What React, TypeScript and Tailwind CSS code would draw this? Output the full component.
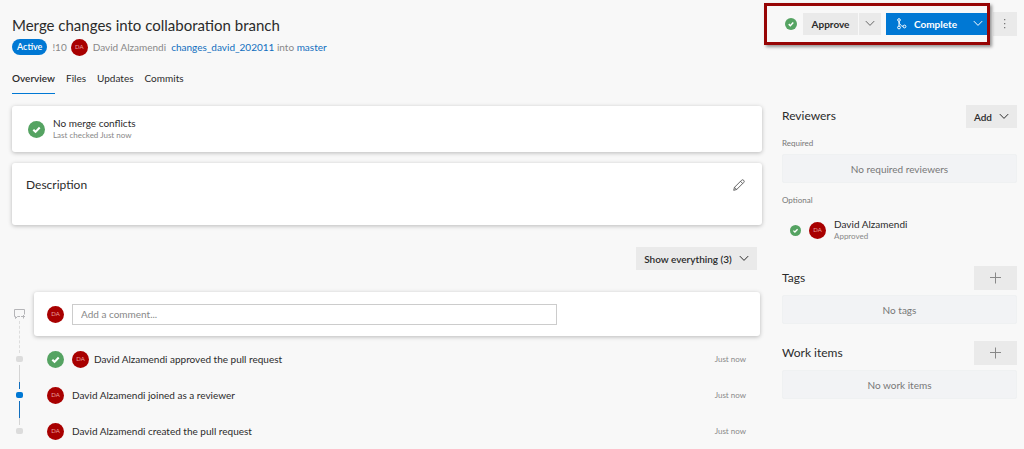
import React from "react";

function CheckCircle({ className }: { className: string }) {
  return (
    <svg viewBox="0 0 18 18" className={className + " shrink-0"} aria-hidden="true">
      <circle cx="9" cy="9" r="9" fill="#55a362" />
      <path d="M5.6 9.2 8 11.5l4.4-4.6" fill="none" stroke="#fff" strokeWidth="2.2" />
    </svg>
  );
}

function Avatar() {
  return (
    <span className="flex size-[17px] shrink-0 items-center justify-center rounded-full bg-[#a80000] text-[6px] leading-none text-[#e8a0a0]">
      DA
    </span>
  );
}

function Chevron() {
  return (
    <svg viewBox="0 0 10 10" className="size-[10px] shrink-0" fill="none" stroke="currentColor" aria-hidden="true">
      <path d="M0.8 2.1 5 6.4l4.2-4.3" />
    </svg>
  );
}

function Plus() {
  return (
    <svg viewBox="0 0 12 12" className="size-3" stroke="#888" aria-hidden="true">
      <path d="M5.5 0.5v11M0 5.5h11" />
    </svg>
  );
}

function MergeIcon() {
  return (
    <svg viewBox="0 0 11 12" className="h-3 w-[11px]" fill="none" stroke="#fff" aria-hidden="true">
      <circle cx="3" cy="2" r="1.3" />
      <circle cx="3" cy="9.5" r="1.4" />
      <circle cx="8.500" cy="8.500" r="1.400" />
      <path d="M3 3.300v4.800M3 3.600C3.400 6.200 5 8 7.100 8.400" />
    </svg>
  );
}

function PencilIcon() {
  return (
    <svg viewBox="0 0 12 12" className="size-3" fill="none" stroke="#555" strokeWidth="0.9" aria-hidden="true">
      <path d="M0.7 11.300 1.500 8.300 8.500 1.300a1.300 1.300 0 0 1 2.200 2.200L3.700 10.500zM7.500 2.300l2.200 2.200M1.500 8.300l2.200 2.200" />
    </svg>
  );
}

function CommentIcon() {
  return (
    <svg viewBox="0 0 12 11" className="h-[11px] w-3" fill="none" stroke="#b5b5b8" aria-hidden="true">
      <path d="M7 7.500H4.500l-2 2v-2h-1v-7h10v5M8 7.500h4M10.500 6v3.500" />
    </svg>
  );
}

function EmptyBox({ children }: { children: React.ReactNode }) {
  return (
    <div className="flex h-[29px] items-center justify-center rounded-xs border border-[#eff1f2] bg-[#f2f3f5] text-[#777]">
      {children}
    </div>
  );
}

function SectionHead({ title }: { title: string }) {
  return (
    <div className="flex items-center justify-between">
      <h2 className="text-[12px]">{title}</h2>
      <button aria-label={"Add " + title.toLowerCase()} className="flex h-6 w-[43px] items-center justify-center bg-[#eaeaea]">
        <Plus />
      </button>
    </div>
  );
}

const tabs = ["Overview", "Files", "Updates", "Commits"];

const events = [
  { text: "David Alzamendi approved the pull request", approved: true },
  { text: "David Alzamendi joined as a reviewer", approved: false },
  { text: "David Alzamendi created the pull request", approved: false },
];

const card = "rounded-[3px] bg-white shadow-[0_1px_4px_rgba(0,0,0,0.26)]";

export default function App() {
  return (
    <div className="min-h-screen bg-[#f8f8f8] pr-[7px] pl-3 font-[Lato,sans-serif] text-[10px] leading-4 text-[#2b2b2b]">
      <header className="flex items-start justify-between pt-3">
        <div>
          <h1 className="h-[26px] text-[15px] leading-[26px]">Merge changes into collaboration branch</h1>
          <div className="flex h-[18px] items-center text-[#888]">
            <span className="flex h-4 items-center rounded-full bg-[#0078d4] px-[5px] text-[9px] font-semibold text-white">Active</span>
            <span className="mr-1 ml-[5px]">!10</span>
            <Avatar />
            <span className="mr-[5px] ml-[5px]">David Alzamendi</span>
            <span>
              <a href="#source" className="text-[#106ebe]">changes_david_202011</a> into{" "}
              <a href="#target" className="text-[#106ebe]">master</a>
            </span>
          </div>
        </div>
        <div className="relative flex h-6 items-center">
          <CheckCircle className="mr-[6px] size-3" />
          <button className="h-[22px] w-[55px] bg-[#eaeaea] font-bold">Approve</button>
          <button aria-label="Approve options" className="ml-px flex h-[22px] w-[22px] items-center justify-center bg-[#eaeaea] text-[#666]">
            <Chevron />
          </button>
          <button className="ml-[5px] flex h-[22px] w-[81px] items-center justify-center gap-[7px] bg-[#0078d4] font-bold text-white">
            <MergeIcon />
            Complete
          </button>
          <button aria-label="Complete options" className="flex h-[22px] w-[22px] items-center justify-center bg-[#0078d4] text-white">
            <Chevron />
          </button>
          <button aria-label="More options" className="ml-1 flex h-6 w-6 items-center justify-center bg-[#eaeaea]">
            <svg viewBox="0 0 2 12" className="h-3 w-[2px]" fill="#777" aria-hidden="true">
              <path d="M0 1h1.300v1.300H0zM0 5h1.300v1.300H0zM0 9h1.300v1.300H0z" />
            </svg>
          </button>
          <div className="pointer-events-none absolute -top-[9px] right-[27px] -left-[21px] h-[42px] border-3 border-[#970505] shadow-[2px_2px_3px_rgba(0,0,0,0.4)]" />
        </div>
      </header>

      <nav className="mt-[14px] flex gap-[11px]">
        {tabs.map((t, i) => (
          <a
            key={t}
            href={"#" + t.toLowerCase()}
            className={i === 0 ? "h-6 border-b border-[#0078d4] font-semibold" : "h-6"}
          >
            {t}
          </a>
        ))}
      </nav>

      <div className="mt-[11px] flex items-start gap-5">
        <main className="min-w-0 flex-1 pt-px">
          <section className={card + " flex h-[46px] items-center gap-2 pl-4"}>
            <CheckCircle className="size-[17px]" />
            <div className="leading-3">
              <p>No merge conflicts</p>
              <p className="text-[8px] text-[#888]">Last checked Just now</p>
            </div>
          </section>

          <section className={card + " mt-[11px] flex h-[62px] items-start justify-between pt-[14px] pr-[17px] pl-[14px]"}>
            <h2 className="text-[12px]">Description</h2>
            <button aria-label="Edit description" className="mt-[2px]">
              <PencilIcon />
            </button>
          </section>

          <div className="mt-[22px] flex justify-end pr-[5px]">
            <button className="flex h-[23px] w-[121px] items-center justify-center gap-[7px] bg-[#eaeaea] font-semibold">
              Show everything (3)
              <Chevron />
            </button>
          </div>

          <div className="mt-[22px] flex gap-[8px] pr-[2px]">
            <div className="flex w-[14px] shrink-0 flex-col items-center pt-[17px]" aria-hidden="true">
              <CommentIcon />
              <span className="mt-px h-8 border-l border-dashed border-[#ddd]" />
              <span className="my-[3px] h-[6px] w-[7px] rounded-[2px] bg-[#dcdcdc]" />
              <span className="h-[17px] w-px bg-[#d4d4d4]" />
              <span className="h-[7px] w-px bg-[#106ebe]" />
              <span className="my-[3px] h-[6px] w-[7px] rounded-[2px] bg-[#0078d4]" />
              <span className="h-[17px] w-px bg-[#106ebe]" />
              <span className="h-[7px] w-px bg-[#d4d4d4]" />
              <span className="my-[3px] h-[6px] w-[7px] rounded-[2px] bg-[#dcdcdc]" />
            </div>
            <div className="min-w-0 flex-1">
              <div className={card + " flex h-11 items-center gap-2 pr-[203px] pl-[13px]"}>
                <Avatar />
                <input
                  aria-label="Add a comment"
                  placeholder="Add a comment..."
                  className="h-[21px] min-w-0 flex-1 border border-[#ccc] bg-white px-2 placeholder:text-[#888]"
                />
              </div>
              <ul className="pt-[5px]">
                {events.map((e) => (
                  <li key={e.text} className="flex h-9 items-center justify-between pr-[14px] pl-[13px]">
                    <div className={e.approved ? "flex items-center gap-[5px]" : "flex items-center gap-2"}>
                      {e.approved && <CheckCircle className="mr-[3px] size-[17px]" />}
                      <Avatar />
                      <span>{e.text}</span>
                    </div>
                    <span className="text-[8px] text-[#888]">Just now</span>
                  </li>
                ))}
              </ul>
            </div>
          </div>
        </main>

        <aside className="w-[235px] shrink-0">
          <div className="flex items-start justify-between">
            <h2 className="pt-[3px] text-[12px]">Reviewers</h2>
            <button className="flex h-[23px] w-[51px] items-center justify-center gap-[7px] bg-[#eaeaea] font-semibold">
              Add
              <Chevron />
            </button>
          </div>
          <h3 className="mt-[7px] mb-[3px] text-[8px] text-[#777]">Required</h3>
          <EmptyBox>No required reviewers</EmptyBox>
          <h3 className="mt-[9px] text-[8px] text-[#777]">Optional</h3>
          <div className="mt-[10px] flex items-center gap-2 pl-2">
            <CheckCircle className="size-[11px]" />
            <Avatar />
            <div className="leading-3">
              <p>David Alzamendi</p>
              <p className="text-[8px] text-[#888]">Approved</p>
            </div>
          </div>
          <div className="mt-6 flex flex-col gap-[5px]">
            <SectionHead title="Tags" />
            <EmptyBox>No tags</EmptyBox>
          </div>
          <div className="mt-[17px] flex flex-col gap-[5px]">
            <SectionHead title="Work items" />
            <EmptyBox>No work items</EmptyBox>
          </div>
        </aside>
      </div>
    </div>
  );
}
